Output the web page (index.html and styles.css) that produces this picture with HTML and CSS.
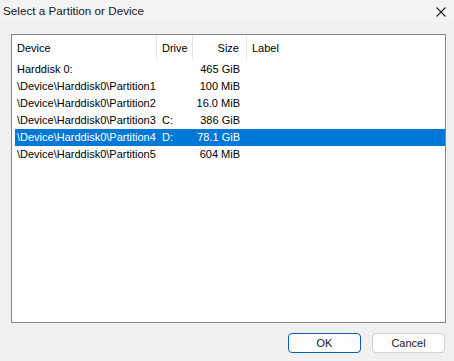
FILE: index.html
```html
<!DOCTYPE html>
<html>
<head>
<meta charset="utf-8">
<link rel="stylesheet" href="styles.css">
</head>
<body>
<div class="window">
  <div class="titlebar">
    <span class="title">Select a Partition or Device</span>
    <svg class="close" width="10" height="10" viewBox="0 0 10 10"><path d="M0.5 0.5 L9.5 9.5 M9.5 0.5 L0.5 9.5" stroke="#1c1c1c" stroke-width="1.1" fill="none"/></svg>
  </div>
  <div class="listbox">
    <div class="row header">
      <div class="c dev">Device</div>
      <div class="c drv">Drive</div>
      <div class="c size">Size</div>
      <div class="c label">Label</div>
    </div>
    <div class="row item"><div class="c dev">Harddisk 0:</div><div class="c drv"></div><div class="c size">465 GiB</div><div class="c label"></div></div>
    <div class="row item"><div class="c dev">\Device\Harddisk0\Partition1</div><div class="c drv"></div><div class="c size">100 MiB</div><div class="c label"></div></div>
    <div class="row item"><div class="c dev">\Device\Harddisk0\Partition2</div><div class="c drv"></div><div class="c size">16.0 MiB</div><div class="c label"></div></div>
    <div class="row item"><div class="c dev">\Device\Harddisk0\Partition3</div><div class="c drv">C:</div><div class="c size">386 GiB</div><div class="c label"></div></div>
    <div class="row item selected"><div class="c dev">\Device\Harddisk0\Partition4</div><div class="c drv">D:</div><div class="c size">78.1 GiB</div><div class="c label"></div></div>
    <div class="row item"><div class="c dev">\Device\Harddisk0\Partition5</div><div class="c drv"></div><div class="c size">604 MiB</div><div class="c label"></div></div>
  </div>
  <div class="buttons">
    <button class="btn default">OK</button>
    <button class="btn">Cancel</button>
  </div>
</div>
</body>
</html>
```
FILE: styles.css
```css
html, body {
  margin: 0;
  padding: 0;
}
body {
  width: 454px;
  height: 361px;
  overflow: hidden;
  font-family: "Liberation Sans", Arial, sans-serif;
  font-size: 11px;
  color: #000;
}
.window {
  width: 454px;
  height: 361px;
  background: #f0f0f0;
  display: flex;
  flex-direction: column;
}
.titlebar {
  height: 22px;
  background: #f3f3f5;
  display: flex;
  align-items: center;
  justify-content: space-between;
  padding-left: 3px;
  padding-right: 8px;
}
.title {
  font-size: 11.7px;
  color: #1a1a1a;
  line-height: 22px;
}
.close {
  display: block;
  margin-top: 2px;
}
.listbox {
  margin: 12px 0 0 11px;
  width: 433px;
  height: 287px;
  border: 1px solid #828790;
  background: #fff;
  display: flex;
  flex-direction: column;
}
.row {
  display: grid;
  grid-template-columns: 142px 36px 54px 1fr;
  margin-left: 3px;
}
.header {
  height: 25px;
  align-items: stretch;
  margin-bottom: 1px;
}
.header .c {
  display: flex;
  align-items: center;
  border-right: 1px solid #e5e5e5;
}
.header .c.label {
  border-right: none;
}
.item {
  height: 17px;
  align-items: center;
  line-height: 17px;
}
.c {
  white-space: nowrap;
  overflow: visible;
  padding-left: 2px;
}
.drv, .label {
  padding-left: 5px;
}
.size {
  text-align: right;
  justify-content: flex-end;
  padding-right: 7px;
}
.selected {
  background: #0078d7;
  color: #fff;
}
.buttons {
  display: flex;
  justify-content: flex-end;
  gap: 11px;
  margin-top: 10px;
  padding-right: 9px;
}
.btn {
  width: 73px;
  height: 20px;
  font-family: "Liberation Sans", Arial, sans-serif;
  font-size: 11px;
  color: #1a1a1a;
  background: #fdfdfd;
  border: 1px solid #d0d0d0;
  border-radius: 4px;
  padding: 0;
}
.btn.default {
  border: 1px solid #005fb8;
  box-shadow: inset 0 0 0 1px #fdfdfd;
}
```
